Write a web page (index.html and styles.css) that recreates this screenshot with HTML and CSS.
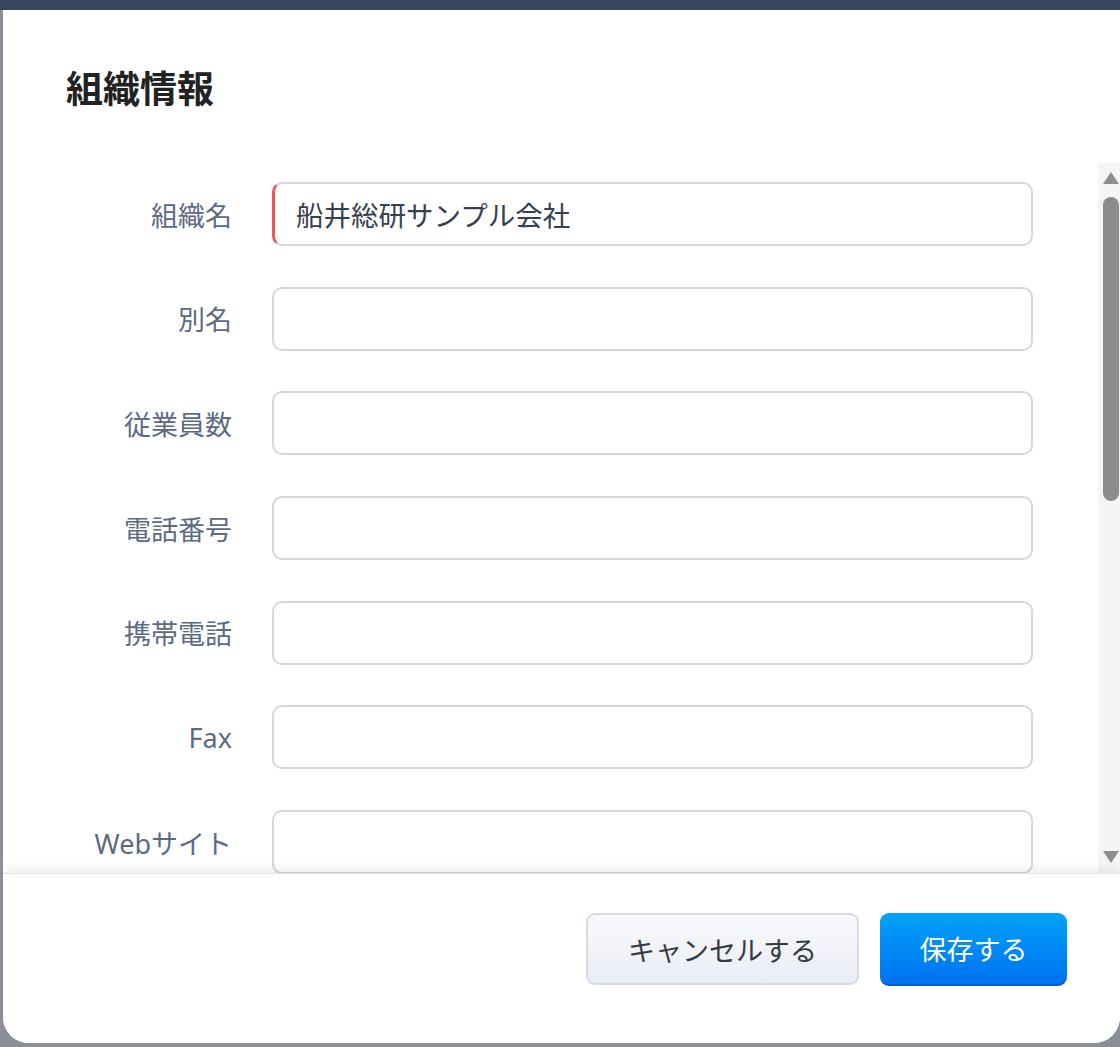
FILE: index.html
```html
<!DOCTYPE html>
<html lang="ja">

<head>
    <meta charset="UTF-8">
    <meta name="viewport" content="width=device-width, initial-scale=1.0">
    <title>組織情報</title>
    <link rel="stylesheet" href="styles.css">
</head>

<body>
    <div class="topbar"></div>

    <div class="stage">
        <div class="modal">
            <div class="modal-header">
                <h1 class="modal-title">組織情報</h1>
            </div>

            <div class="modal-body">
                <form class="org-form">
                    <div class="row">
                        <label class="row-label">組織名</label>
                        <div class="field required">船井総研サンプル会社</div>
                    </div>
                    <div class="row">
                        <label class="row-label">別名</label>
                        <div class="field"></div>
                    </div>
                    <div class="row">
                        <label class="row-label">従業員数</label>
                        <div class="field"></div>
                    </div>
                    <div class="row">
                        <label class="row-label">電話番号</label>
                        <div class="field"></div>
                    </div>
                    <div class="row">
                        <label class="row-label">携帯電話</label>
                        <div class="field"></div>
                    </div>
                    <div class="row">
                        <label class="row-label">Fax</label>
                        <div class="field"></div>
                    </div>
                    <div class="row">
                        <label class="row-label">Webサイト</label>
                        <div class="field"></div>
                    </div>
                </form>

                <!-- scrollbar -->
                <div class="scrollbar">
                    <span class="arrow arrow-up"></span>
                    <div class="track">
                        <div class="thumb"></div>
                    </div>
                    <span class="arrow arrow-down"></span>
                </div>
            </div>

            <div class="modal-footer">
                <button type="button" class="btn btn-cancel">キャンセルする</button>
                <button type="button" class="btn btn-save">保存する</button>
            </div>
        </div>
    </div>
</body>

</html>
```

FILE: styles.css
```css
/* General styles */
body {
    margin: 0;
    padding: 0;
    height: 1047px;
    overflow: hidden;
    background-color: #8a8f99;
    font-family: "Noto Sans", "Noto Sans CJK JP", sans-serif;
    color: #333;
}

.topbar {
    height: 10px;
    background-color: #34495f;
}

.stage {
    padding-left: 3px;
}

.modal {
    width: 1117px;
    height: 1033px;
    background-color: #fff;
    border-radius: 0 0 26px 26px;
    display: flex;
    flex-direction: column;
    overflow: hidden;
}

/* Header */
.modal-header {
    height: 153px;
    box-sizing: border-box;
    padding: 56px 0 0 63px;
}

.modal-title {
    margin: 0;
    font-size: 37px;
    line-height: 46px;
    font-weight: 700;
    color: #222;
}

/* Body */
.modal-body {
    height: 710px;
    display: flex;
    overflow: hidden;
}

.org-form {
    flex: 1;
    padding: 19px 65px 0 0;
    display: flex;
    flex-direction: column;
    gap: 40.7px;
}

.row {
    display: flex;
    align-items: center;
    gap: 40px;
}

.row-label {
    width: 229px;
    flex-shrink: 0;
    text-align: right;
    font-size: 27px;
    color: #5d6a84;
}

.field {
    flex: 1;
    height: 64px;
    box-sizing: border-box;
    border: 2px solid #d3d7de;
    border-radius: 10px;
    padding: 0 22px;
    display: flex;
    align-items: center;
    font-size: 27.5px;
    color: #36404f;
}

.field.required {
    border-left: 3px solid #f25555;
    padding-left: 21px;
}

/* Scrollbar */
.scrollbar {
    width: 22px;
    flex-shrink: 0;
    background-color: #f5f5f5;
    display: flex;
    flex-direction: column;
    align-items: center;
    padding: 9px 0 10px;
    box-sizing: border-box;
}

.arrow {
    width: 0;
    height: 0;
    border-left: 8px solid transparent;
    border-right: 8px solid transparent;
    margin-left: 3px;
}

.arrow-up {
    border-bottom: 12px solid #8d8d8d;
}

.arrow-down {
    border-top: 12px solid #8d8d8d;
}

.track {
    flex: 1;
    width: 100%;
    padding-top: 13px;
    box-sizing: border-box;
    display: flex;
    justify-content: center;
}

.thumb {
    width: 16px;
    height: 304px;
    margin-left: 3px;
    border-radius: 8px;
    background-color: #8c8c8c;
}

/* Footer */
.modal-footer {
    flex: 1;
    border-top: 1px solid #e2e4e8;
    box-shadow: 0 -6px 10px rgba(0, 0, 0, 0.06);
    display: flex;
    justify-content: flex-end;
    align-items: flex-start;
    gap: 21px;
    padding: 39px 53px 0 0;
    background-color: #fff;
}

.btn {
    font-family: "Noto Sans", "Noto Sans CJK JP", sans-serif;
    font-size: 27px;
    border-radius: 9px;
    cursor: pointer;
    height: 72px;
    padding: 0;
}

.btn-cancel {
    width: 273px;
    color: #333a45;
    background: linear-gradient(#f8f9fc, #eaedf4);
    border: 2px solid #d6dae2;
}

.btn-save {
    width: 187px;
    height: 73px;
    color: #fff;
    background: linear-gradient(#00a3f7, #0071f0);
    border: none;
    border-bottom: 2px solid #005fcc;
}
```
